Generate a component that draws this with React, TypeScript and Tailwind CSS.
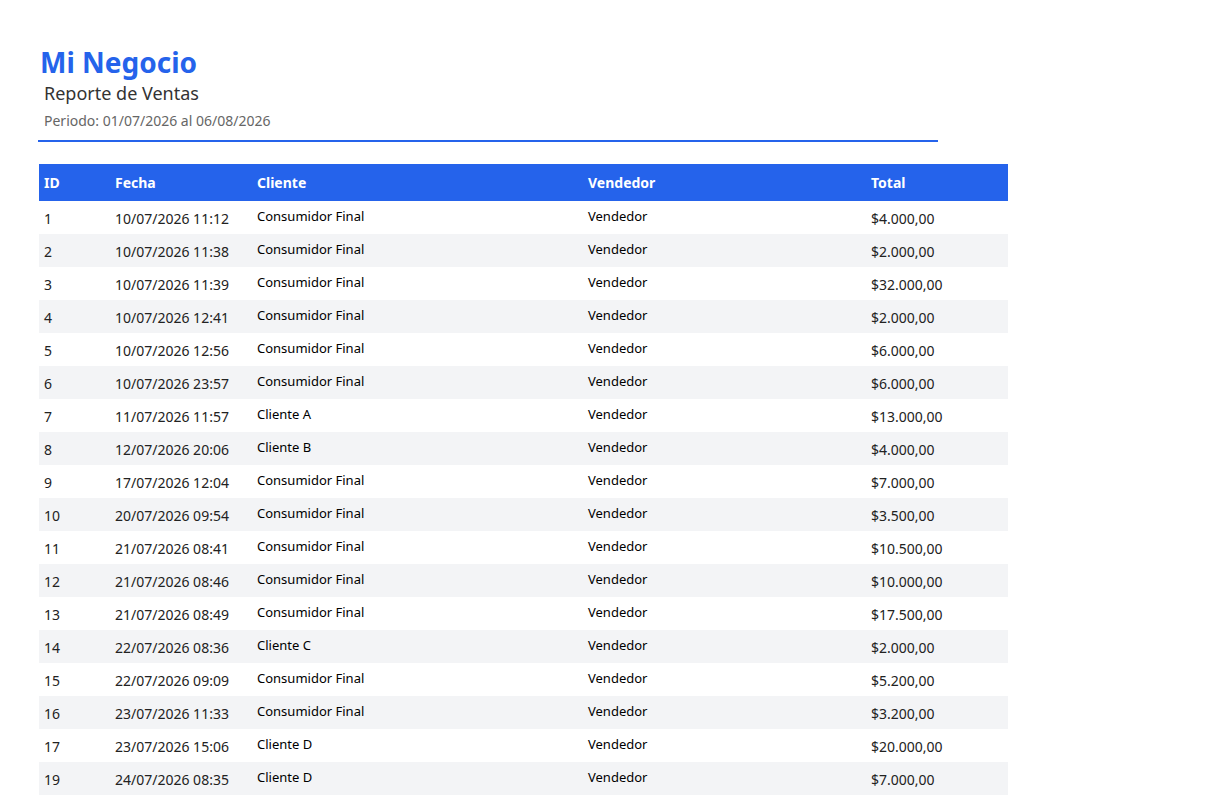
const rows = [
  ["1", "10/07/2026 11:12", "Consumidor Final", "$4.000,00"],
  ["2", "10/07/2026 11:38", "Consumidor Final", "$2.000,00"],
  ["3", "10/07/2026 11:39", "Consumidor Final", "$32.000,00"],
  ["4", "10/07/2026 12:41", "Consumidor Final", "$2.000,00"],
  ["5", "10/07/2026 12:56", "Consumidor Final", "$6.000,00"],
  ["6", "10/07/2026 23:57", "Consumidor Final", "$6.000,00"],
  ["7", "11/07/2026 11:57", "Cliente A", "$13.000,00"],
  ["8", "12/07/2026 20:06", "Cliente B", "$4.000,00"],
  ["9", "17/07/2026 12:04", "Consumidor Final", "$7.000,00"],
  ["10", "20/07/2026 09:54", "Consumidor Final", "$3.500,00"],
  ["11", "21/07/2026 08:41", "Consumidor Final", "$10.500,00"],
  ["12", "21/07/2026 08:46", "Consumidor Final", "$10.000,00"],
  ["13", "21/07/2026 08:49", "Consumidor Final", "$17.500,00"],
  ["14", "22/07/2026 08:36", "Cliente C", "$2.000,00"],
  ["15", "22/07/2026 09:09", "Consumidor Final", "$5.200,00"],
  ["16", "23/07/2026 11:33", "Consumidor Final", "$3.200,00"],
  ["17", "23/07/2026 15:06", "Cliente D", "$20.000,00"],
  ["19", "24/07/2026 08:35", "Cliente D", "$7.000,00"],
];

export default function App() {
  return (
    <div className="h-[796px] overflow-hidden bg-white pl-[38px] pt-[44px] font-['Liberation_Sans',Arial,sans-serif]">
      <h1 className="pl-[2px] text-[28px] font-bold leading-[36px] text-[#2563eb]">Mi Negocio</h1>
      <div className="pl-[6px] text-[18px] leading-[26px] text-[#333]">Reporte de Ventas</div>
      <div className="mt-[4px] pl-[6px] text-[14px] leading-[22px] text-[#666]">Periodo: 01/07/2026 al 06/08/2026</div>
      <div className="mt-[8px] h-[2px] w-[900px] bg-[#2563eb]" />
      <div className="mt-[22px] ml-[1px] w-[969px]">
        <div className="grid h-[37px] grid-cols-[70px_142px_331px_283px_143px] items-center bg-[#2563eb] text-[14px] font-bold text-white">
          <div className="pl-[5px]">ID</div>
          <div className="pl-[6px]">Fecha</div>
          <div className="pl-[6px]">Cliente</div>
          <div className="pl-[6px]">Vendedor</div>
          <div className="pl-[6px]">Total</div>
        </div>
        {rows.map((r, i) => (
          <div
            key={r[0]}
            className={`grid h-[33px] grid-cols-[70px_142px_331px_283px_143px] items-center text-[14px] text-[#222] ${i % 2 ? "bg-[#f3f4f6]" : "bg-white"}`}
          >
            <div className="pl-[5px] pt-[1px]">{r[0]}</div>
            <div className="pl-[6px] pt-[1px]">{r[1]}</div>
            <div className="pl-[6px] pb-[1px] text-[13px] text-black">{r[2]}</div>
            <div className="pl-[6px] pb-[1px] text-[13px] text-black">Vendedor</div>
            <div className="pl-[6px] pt-[1px]">{r[3]}</div>
          </div>
        ))}
      </div>
    </div>
  );
}
